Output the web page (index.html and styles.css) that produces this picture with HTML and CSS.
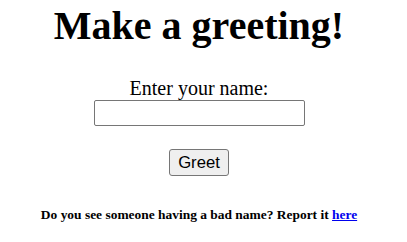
FILE: index.html
```html
<!DOCTYPE html>
<html lang="en">
<head>
<meta charset="utf-8">
<title>Make a greeting!</title>
<link rel="stylesheet" href="styles.css">
</head>
<body>
<main class="page">
  <h1 class="title">Make a greeting!</h1>
  <form class="form">
    <label class="label" for="name">Enter your name:</label>
    <input class="name-input" id="name" type="text">
    <button class="greet-btn" type="button">Greet</button>
  </form>
  <h5 class="report">Do you see someone having a bad name? Report it <a class="report-link" href="#">here</a></h5>
</main>
</body>
</html>
```
FILE: styles.css
```css
html, body {
  margin: 0;
  padding: 0;
  background: #ffffff;
}
body {
  font-family: "Liberation Serif", "Times New Roman", serif;
  color: #000000;
}
.page {
  width: 398px;
  display: flex;
  flex-direction: column;
  align-items: center;
  text-align: center;
}
.title {
  margin: 3px 0 0;
  font-size: 40px;
  line-height: 46px;
  font-weight: bold;
}
.form {
  margin-top: 28px;
  display: flex;
  flex-direction: column;
  align-items: center;
}
.label {
  display: block;
  font-size: 20px;
  line-height: 23px;
}
.name-input {
  box-sizing: border-box;
  width: 211px;
  height: 26px;
  margin: 0;
  padding: 1px 2px;
  border: 1px solid #767676;
  border-radius: 2px;
  font-family: "Liberation Sans", Arial, sans-serif;
  font-size: 16.67px;
  background: #ffffff;
}
.greet-btn {
  box-sizing: border-box;
  width: 60px;
  height: 27px;
  margin: 23px 0 0;
  padding: 0;
  border: 1px solid #767676;
  border-radius: 3px;
  background: #efefef;
  color: #000000;
  font-family: "Liberation Sans", Arial, sans-serif;
  font-size: 16.67px;
}
.report {
  margin: 31px 0 0;
  font-size: 13.45px;
  line-height: 15px;
  font-weight: bold;
}
.report-link {
  color: #0000ee;
  text-decoration: underline;
}
```
